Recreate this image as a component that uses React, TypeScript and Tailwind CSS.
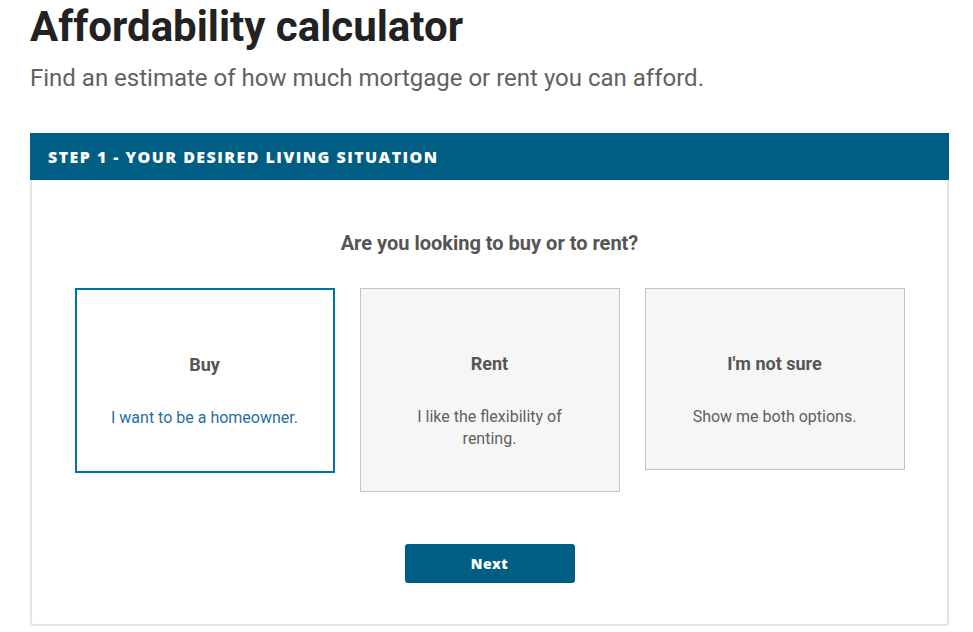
const cards = [
  { title: 'Buy', desc: 'I want to be a homeowner.', active: true },
  { title: 'Rent', desc: 'I like the flexibility of renting.', active: false },
  { title: "I'm not sure", desc: 'Show me both options.', active: false }
];

export default function App() {
  return (
    <div className="min-h-screen bg-white px-[30px] pt-[2px] font-['Roboto',_'Liberation_Sans',_sans-serif] text-[#555]">
      <h1 className="text-[42px] font-bold leading-[50px] text-[#222]">Affordability calculator</h1>
      <p className="mt-[10px] text-[24px] leading-[32px] text-[#616161]">
        Find an estimate of how much mortgage or rent you can afford.
      </p>

      <section className="mt-[39px] w-[919px]">
        <div className="flex h-[47px] items-center bg-[#005e85] px-[18px]">
          <h2 className="font-['Open_Sans',_'DejaVu_Sans',_sans-serif] text-[16px] font-extrabold uppercase tracking-[0.09em] text-white">
            Step 1 - Your desired living situation
          </h2>
        </div>
        <div className="flex flex-col items-center rounded-b-[4px] border-2 border-t-0 border-[#e3e3e3] pb-[41px] pt-[49px]">
          <p className="text-[20px] font-bold leading-[28px] text-[#555]">Are you looking to buy or to rent?</p>

          <div className="mt-[31px] flex items-start gap-[25px]">
            {cards.map((c) => (
              <button
                key={c.title}
                className={
                  c.active
                    ? 'flex w-[260px] flex-col items-center border-2 border-[#0072ab] bg-white px-[30px] pb-[42px] pt-[63px] text-center'
                    : 'flex w-[260px] flex-col items-center border border-[#c4c4c4] bg-[#f6f6f6] px-[31px] pb-[41px] pt-[63px] text-center'
                }
              >
                <span className="text-[18px] font-bold leading-[24px] text-[#555]">{c.title}</span>
                <span
                  className={
                    c.active
                      ? 'mt-[30px] text-[16px] leading-[22px] text-[#1e6fa3]'
                      : 'mt-[30px] text-[16px] leading-[22px] text-[#5f5f5f]'
                  }
                >
                  {c.desc}
                </span>
              </button>
            ))}
          </div>

          <button className="mt-[52px] h-[39px] w-[170px] rounded-[3px] bg-[#005e85] font-['Open_Sans',_'DejaVu_Sans',_sans-serif] text-[14px] font-extrabold tracking-[0.03em] text-white">
            Next
          </button>
        </div>
      </section>
    </div>
  );
}
